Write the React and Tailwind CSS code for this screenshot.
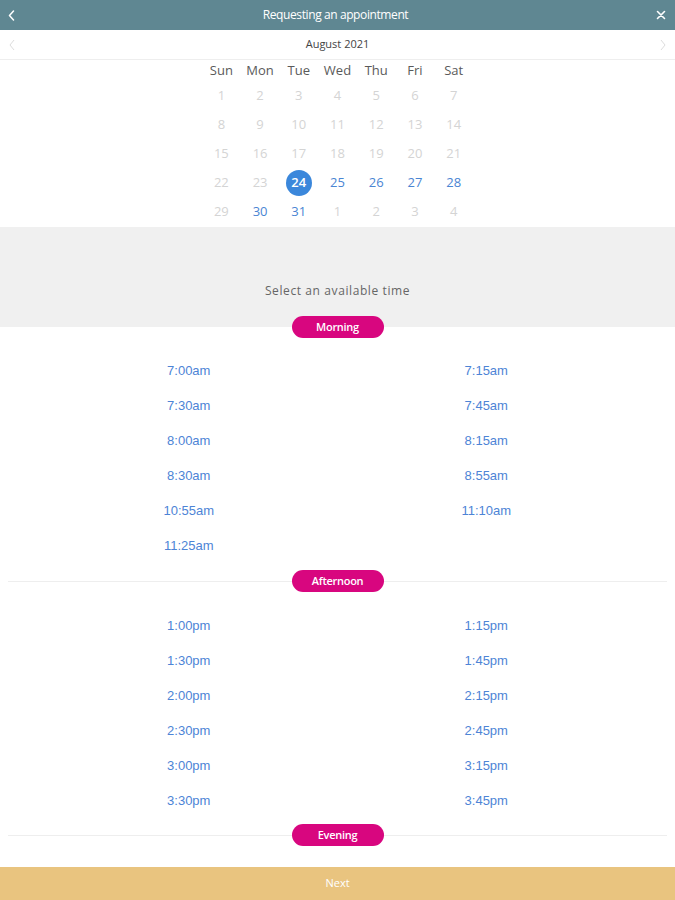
import React from "react";

const weekdays = ["Sun", "Mon", "Tue", "Wed", "Thu", "Fri", "Sat"];

// [day, state] state: 0 disabled, 1 available, 2 selected
const weeks = [
  [[1, 0], [2, 0], [3, 0], [4, 0], [5, 0], [6, 0], [7, 0]],
  [[8, 0], [9, 0], [10, 0], [11, 0], [12, 0], [13, 0], [14, 0]],
  [[15, 0], [16, 0], [17, 0], [18, 0], [19, 0], [20, 0], [21, 0]],
  [[22, 0], [23, 0], [24, 2], [25, 1], [26, 1], [27, 1], [28, 1]],
  [[29, 0], [30, 1], [31, 1], [1, 0], [2, 0], [3, 0], [4, 0]],
];

const morning = ["7:00am", "7:15am", "7:30am", "7:45am", "8:00am", "8:15am", "8:30am", "8:55am", "10:55am", "11:10am", "11:25am"];
const afternoon = ["1:00pm", "1:15pm", "1:30pm", "1:45pm", "2:00pm", "2:15pm", "2:30pm", "2:45pm", "3:00pm", "3:15pm", "3:30pm", "3:45pm"];

const Pill = ({ label }) => (
  <div className="w-[92px] h-[22px] rounded-full bg-[#d8067f] flex items-center justify-center text-white text-[11px] font-semibold font-['Open_Sans',sans-serif] tracking-tight">
    {label}
  </div>
);

const Divider = ({ label, gray }) => (
  <div
    className={
      gray
        ? "h-[22px] flex items-center justify-center bg-[linear-gradient(to_bottom,#f0f0f0_50%,#ffffff_50%)]"
        : "h-[22px] flex items-center px-2"
    }
  >
    {gray ? (
      <Pill label={label} />
    ) : (
      <>
        <div className="flex-1 h-px bg-[#eeeeee]" />
        <Pill label={label} />
        <div className="flex-1 h-px bg-[#eeeeee]" />
      </>
    )}
  </div>
);

const Times = ({ items }) => (
  <div className="grid grid-cols-2 px-[40px]">
    {items.map((t) => (
      <div
        key={t}
        className="h-[35px] flex items-center justify-center text-[13px] text-[#4d84d6] font-['Liberation_Sans',Arial,sans-serif]"
      >
        {t}
      </div>
    ))}
  </div>
);

export default function App() {
  return (
    <div className="w-[675px] h-[900px] flex flex-col bg-white overflow-hidden font-['Open_Sans',sans-serif]">
      {/* Header */}
      <div className="h-[30px] bg-[#5f8792] flex items-center justify-between pl-[8px] pr-[9px] text-white">
        <svg width="7" height="11" viewBox="0 0 7 11" fill="none" stroke="white" strokeWidth="1.5" strokeLinecap="round" strokeLinejoin="round">
          <path d="M5.5 1L1.5 5.5l4 4.5" />
        </svg>
        <div className="text-[12px] tracking-[-0.4px]">Requesting an appointment</div>
        <svg width="10" height="10" viewBox="0 0 10 10" fill="none" stroke="white" strokeWidth="1.6" strokeLinecap="round">
          <path d="M1.5 1.5l7 7M8.5 1.5l-7 7" />
        </svg>
      </div>

      {/* Month */}
      <div className="h-[30px] flex items-center justify-between px-[9px] border-b border-[#eeeeee]">
        <svg width="6" height="12" viewBox="0 0 6 12" fill="none" stroke="#dddddd" strokeWidth="1">
          <path d="M5 1L1 6l4 5" />
        </svg>
        <div className="text-[11px] text-[#444444]">August 2021</div>
        <svg width="6" height="12" viewBox="0 0 6 12" fill="none" stroke="#dddddd" strokeWidth="1">
          <path d="M1 1l4 5-4 5" />
        </svg>
      </div>

      {/* Calendar */}
      <div className="flex justify-center pt-[1px] pb-[1px]">
        <div className="w-[271px]">
          <div className="grid grid-cols-7 h-[20px] items-center">
            {weekdays.map((d) => (
              <div key={d} className="text-center text-[13px] text-[#5a5a5a]">
                {d}
              </div>
            ))}
          </div>
          {weeks.map((w, i) => (
            <div key={i} className="grid grid-cols-7 h-[29px] items-center">
              {w.map(([day, s], j) => (
                <div key={j} className="flex justify-center">
                  {s === 2 ? (
                    <div className="w-[26px] h-[26px] rounded-full bg-[#3b87db] text-white text-[13px] font-semibold flex items-center justify-center">
                      {day}
                    </div>
                  ) : (
                    <span className={s === 1 ? "text-[13px] text-[#4a85d3]" : "text-[13px] text-[#d4d4d4]"}>
                      {day}
                    </span>
                  )}
                </div>
              ))}
            </div>
          ))}
        </div>
      </div>

      {/* Time selection header */}
      <div className="bg-[#f0f0f0] pt-[56px] pb-[17px] text-center text-[12px] leading-[16px] text-[#666666] tracking-[0.6px]">
        Select an available time
      </div>
      <Divider label="Morning" gray />

      <div className="flex-1 overflow-hidden">
        <div className="pt-[15px] pb-[7px]">
          <Times items={morning} />
        </div>
        <Divider label="Afternoon" />
        <div className="pt-[16px] pb-[6px]">
          <Times items={afternoon} />
        </div>
        <Divider label="Evening" />
      </div>

      {/* Next */}
      <div className="h-[33px] bg-[#e9c47f] flex items-center justify-center text-white text-[11px]">
        Next
      </div>
    </div>
  );
}
